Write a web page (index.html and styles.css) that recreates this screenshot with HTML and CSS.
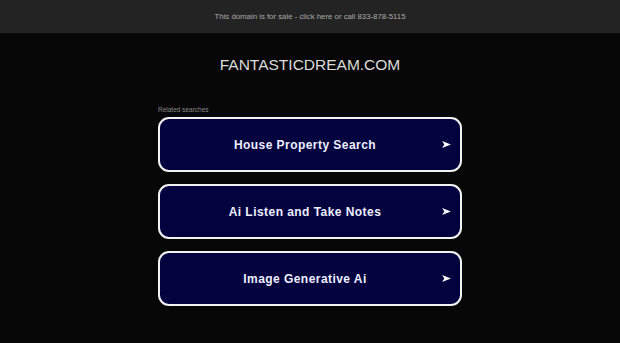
FILE: index.html
```html
<!DOCTYPE html>
<html>
<head>
<meta charset="utf-8">
<link rel="stylesheet" href="styles.css">
</head>
<body>
<div class="topbar"><a class="sale" href="#">This domain is for sale - click here or call 833-878-5115</a></div>
<main class="main">
  <h1 class="domain">FANTASTICDREAM.COM</h1>
  <section class="related">
    <div class="label">Related searches</div>
    <a class="link" href="#"><span class="link-text">House Property Search</span><svg class="arrow" viewBox="0 0 10 8"><path d="M0 0 L10 4 L0 8 L2.5 4 Z" fill="#ffffff"/></svg></a>
    <a class="link" href="#"><span class="link-text">Ai Listen and Take Notes</span><svg class="arrow" viewBox="0 0 10 8"><path d="M0 0 L10 4 L0 8 L2.5 4 Z" fill="#ffffff"/></svg></a>
    <a class="link" href="#"><span class="link-text">Image Generative Ai</span><svg class="arrow" viewBox="0 0 10 8"><path d="M0 0 L10 4 L0 8 L2.5 4 Z" fill="#ffffff"/></svg></a>
  </section>
</main>
</body>
</html>
```
FILE: styles.css
```css
html, body {
  margin: 0;
  padding: 0;
  background: #070707;
  font-family: "Liberation Sans", Arial, sans-serif;
}
.topbar {
  height: 33px;
  background: #232323;
  display: flex;
  align-items: center;
  justify-content: center;
}
.sale {
  color: #ababab;
  font-size: 7.8px;
  text-decoration: none;
}
.main {
  display: flex;
  flex-direction: column;
  align-items: center;
}
.domain {
  margin: 23px 0 0;
  font-size: 15.5px;
  font-weight: normal;
  color: #dcdcdc;
  line-height: 18px;
}
.related {
  width: 304px;
  margin-top: 32px;
  display: flex;
  flex-direction: column;
  gap: 12px;
}
.label {
  font-size: 6.5px;
  line-height: 8px;
  height: 8px;
  color: #8a8a8a;
  margin-bottom: -9px;
}
.link {
  box-sizing: border-box;
  height: 55px;
  border: 2px solid #f2f2f2;
  border-radius: 11px;
  background: #02023f;
  display: flex;
  align-items: center;
  justify-content: center;
  padding-right: 10px;
  position: relative;
  text-decoration: none;
}
.link-text {
  color: #eeeeff;
  font-size: 12px;
  font-weight: bold;
  letter-spacing: 0.45px;
}
.arrow {
  position: absolute;
  right: 9px;
  top: 50%;
  width: 9px;
  height: 7px;
  margin-top: -3.5px;
}
```
